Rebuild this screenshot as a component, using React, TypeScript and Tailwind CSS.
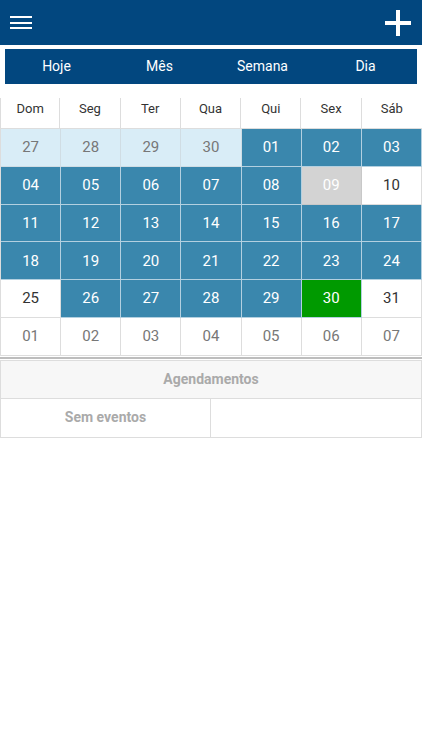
import React from 'react';

type Kind = 'past' | 'event' | 'off' | 'plain' | 'today' | 'next';

const DAYS = ['Dom', 'Seg', 'Ter', 'Qua', 'Qui', 'Sex', 'Sáb'];

const WEEKS: [string, Kind][][] = [
  [['27', 'past'], ['28', 'past'], ['29', 'past'], ['30', 'past'], ['01', 'event'], ['02', 'event'], ['03', 'event']],
  [['04', 'event'], ['05', 'event'], ['06', 'event'], ['07', 'event'], ['08', 'event'], ['09', 'off'], ['10', 'plain']],
  [['11', 'event'], ['12', 'event'], ['13', 'event'], ['14', 'event'], ['15', 'event'], ['16', 'event'], ['17', 'event']],
  [['18', 'event'], ['19', 'event'], ['20', 'event'], ['21', 'event'], ['22', 'event'], ['23', 'event'], ['24', 'event']],
  [['25', 'plain'], ['26', 'event'], ['27', 'event'], ['28', 'event'], ['29', 'event'], ['30', 'today'], ['31', 'plain']],
  [['01', 'next'], ['02', 'next'], ['03', 'next'], ['04', 'next'], ['05', 'next'], ['06', 'next'], ['07', 'next']],
];

const cellStyles: Record<Kind, string> = {
  past: 'bg-[#d9edf7] text-[#777] border-[#d0dde4]',
  event: 'bg-[#3a87ad] text-white border-[#b3d0e0]',
  off: 'bg-[#d3d3d3] text-white border-[#c8c8c8]',
  plain: 'bg-white text-[#333] border-[#ddd]',
  today: 'bg-[#009a00] text-white border-[#b3d0e0]',
  next: 'bg-white text-[#777] border-[#ddd]',
};

export default function App() {
  return (
    <div className="min-h-[750px] bg-white font-['Roboto',sans-serif]">
      <header className="flex h-[45px] items-center justify-between bg-[#02477f] px-[10px]">
        <button className="flex h-[21px] w-[22px] flex-col justify-between py-[4px]">
          <span className="h-[2px] w-full bg-white"></span>
          <span className="h-[2px] w-full bg-white"></span>
          <span className="h-[2px] w-full bg-white"></span>
        </button>
        <svg width="26" height="26" viewBox="0 0 26 26" className="mr-[1px]">
          <rect x="11" y="0" width="4" height="26" fill="#fff" />
          <rect x="0" y="11" width="26" height="4" fill="#fff" />
        </svg>
      </header>

      <nav className="mx-[5px] mt-[4px] grid h-[35px] grid-cols-4 items-center bg-[#02477f] text-[14px] text-white">
        {['Hoje', 'Mês', 'Semana', 'Dia'].map((t) => (
          <span key={t} className="text-center">{t}</span>
        ))}
      </nav>

      <div className="mt-[14px] grid grid-cols-7 border-b border-[#ddd]">
        {DAYS.map((d, i) => (
          <div
            key={d}
            className={`h-[30px] border-[#ddd] pt-px text-center text-[13px] leading-[20px] text-[#333] ${i < 6 ? 'border-r' : ''} ${i === 0 ? 'border-l' : ''}`}
          >
            {d}
          </div>
        ))}
      </div>

      <div className="grid grid-cols-7 border-l border-[#ddd]">
        {WEEKS.flat().map(([n, k], i) => (
          <div
            key={i}
            className={`flex h-[37.8px] items-center justify-center border-r border-b text-[15px] ${cellStyles[k]}`}
          >
            {n}
          </div>
        ))}
      </div>

      <div className="mt-px h-[2px] bg-[#bdbdbd]"></div>

      <div className="mt-px border border-[#ddd] text-[14px] font-bold text-[#aaa]">
        <div className="flex h-[38px] items-center justify-center border-b border-[#ddd] bg-[#f7f7f7]">
          Agendamentos
        </div>
        <div className="grid h-[38px] grid-cols-2">
          <div className="flex items-center justify-center border-r border-[#ddd]">Sem eventos</div>
          <div></div>
        </div>
      </div>
    </div>
  );
}
